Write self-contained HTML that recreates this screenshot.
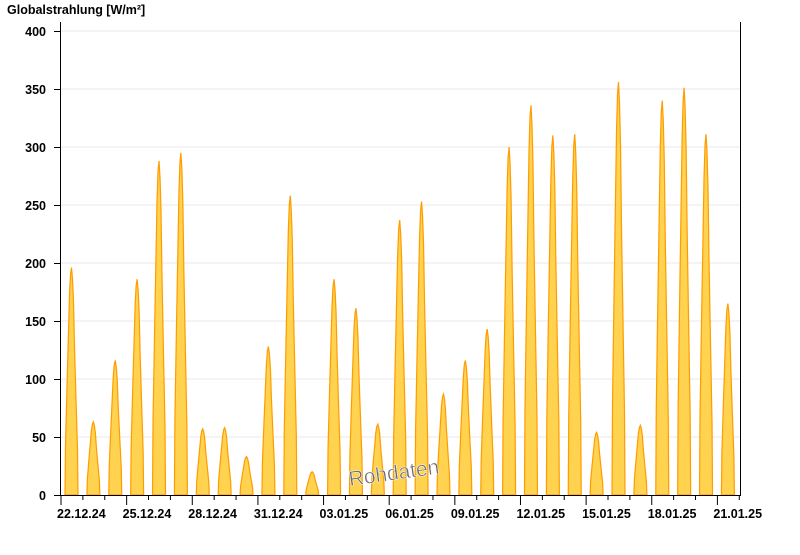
<!DOCTYPE html>
<html><head><meta charset="utf-8"><style>
body{margin:0;background:#fff;width:800px;height:550px;overflow:hidden}
svg text{font-family:"Liberation Sans",Arial,sans-serif}
</style></head><body>
<svg id="c" width="800" height="550" xmlns="http://www.w3.org/2000/svg">
<rect width="800" height="550" fill="#fff"/>
<text x="7" y="14" font-size="12.5" font-weight="bold" fill="#000">Globalstrahlung [W/m²]</text>
<g id="grid"></g>
<g id="peaks"></g>
<g id="axes"></g>
<text x="348" y="479" font-size="21" fill="#6a6a6a" stroke="#fff" stroke-width="0.5" transform="rotate(-8 400 470)">Rohdaten</text>
</svg>
<script>
var ns="http://www.w3.org/2000/svg";
function el(p,t,a,txt){var e=document.createElementNS(ns,t);for(var k in a)e.setAttribute(k,a[k]);if(txt)e.textContent=txt;document.getElementById(p).appendChild(e);}
var y0=495,sc=1.16;
for(var v=0;v<=400;v+=50){var y=y0-v*sc;
 if(v>0)el('grid','line',{x1:61,x2:740,y1:y,y2:y,stroke:'#e8e8e8','stroke-width':1});
 el('axes','line',{x1:54,x2:61,y1:y+.5,y2:y+.5,stroke:'#000'});
 el('axes','text',{x:46,y:y+5,'font-size':12.5,'font-weight':'bold','text-anchor':'end'},String(v));}
var h=[196,63,116,186,288,295,57,58,33,128,258,20,186,161,61,237,253,87,116,143,300,336,310,311,54,356,60,340,351,311,165];
var d=21.88,f=[0,.22,.48,.72,.88,.97,1,.95,.85,.65,.42,.2,0],o=[-6.5,-6,-4.5,-3,-2,-1,0,1,2,3,4.5,6,6.5];
h.forEach(function(v,i){var cx=71.5+d*i,pts=[];
 for(var k=0;k<f.length;k++){var x=cx+o[k];var yy=y0-v*sc*f[k];pts.push(x+','+yy);}
 el('peaks','polygon',{points:pts.join(' '),fill:'#ffd24f',stroke:'#ff9c00','stroke-width':1.2});});
el('axes','line',{x1:60.5,x2:60.5,y1:22,y2:495,stroke:'#000'});
el('axes','line',{x1:740.5,x2:740.5,y1:22,y2:495,stroke:'#000'});
el('axes','line',{x1:54,x2:741,y1:495.5,y2:495.5,stroke:'#000'});
var labs=['22.12.24','25.12.24','28.12.24','31.12.24','03.01.25','06.01.25','09.01.25','12.01.25','15.01.25','18.01.25','21.01.25'];
for(var i=0;i<=31;i++){var x=61+d*i;if(x>741)break;var maj=i%3==0;
 el('axes','line',{x1:x,x2:x,y1:495,y2:maj?505:500,stroke:'#000'});
 if(maj)el('axes','text',{x:x-4,y:518,'font-size':12.5,'font-weight':'bold'},labs[i/3]);}
</script>
</body></html>
